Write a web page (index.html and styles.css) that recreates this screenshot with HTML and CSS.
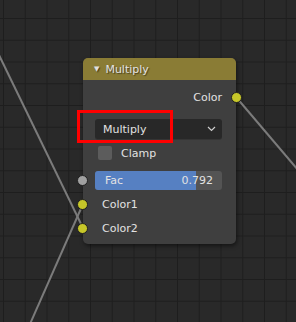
FILE: index.html
```html
<!DOCTYPE html>
<html lang="en">
<head>
    <meta charset="UTF-8">
    <title>Multiply node</title>
    <link rel="stylesheet" href="styles.css">
</head>
<body>
    <div class="editor">
        <svg class="noodles" width="296" height="322" viewBox="0 0 296 322">
            <line x1="-2" y1="53" x2="83" y2="228" />
            <line x1="30" y1="324" x2="83" y2="204" />
            <line x1="236" y1="97" x2="298" y2="170" />
        </svg>

        <div class="node">
            <div class="node-header">
                <span class="collapse">&#9660;</span>
                <span>Multiply</span>
            </div>
            <div class="node-body">
                <div class="row output">
                    <span>Color</span>
                    <span class="socket socket-out yellow"></span>
                </div>
                <div class="dropdown">
                    <span>Multiply</span>
                    <svg class="chevron" width="9" height="6" viewBox="0 0 9 6">
                        <path d="M1 1 L4.5 4.5 L8 1" />
                    </svg>
                </div>
                <div class="row check">
                    <span class="checkbox"></span>
                    <span>Clamp</span>
                </div>
                <div class="row slider-row">
                    <span class="socket socket-in grey"></span>
                    <div class="slider">
                        <div class="slider-fill" style="width: 79.2%"></div>
                        <span class="slider-label">Fac</span>
                        <span class="slider-value">0.792</span>
                    </div>
                </div>
                <div class="row input">
                    <span class="socket socket-in yellow"></span>
                    <span>Color1</span>
                </div>
                <div class="row input">
                    <span class="socket socket-in yellow"></span>
                    <span>Color2</span>
                </div>
            </div>
        </div>

        <!-- red annotation box drawn over the mode dropdown -->
        <div class="highlight"></div>
    </div>
</body>
</html>
```

FILE: styles.css
```css
body {
    margin: 0;
    padding: 0;
    background-color: #282828;
    font-family: "DejaVu Sans", sans-serif;
    font-size: 11px;
    color: #e2e2e2;
}

.editor {
    position: relative;
    width: 296px;
    height: 322px;
    overflow: hidden;
    background-color: #292929;
    background-image:
        linear-gradient(to right, #1e1e1e 1px, transparent 1px),
        linear-gradient(to bottom, #1e1e1e 1px, transparent 1px);
    background-size: 21.75px 21.75px;
    background-position: 3px 18px;
}

.noodles {
    position: absolute;
    left: 0;
    top: 0;
}

.noodles line {
    stroke: #7b7b7b;
    stroke-width: 2;
}

.node {
    position: absolute;
    left: 83px;
    top: 58px;
    width: 153px;
    height: 186px;
    border-radius: 5px;
    background-color: #3f3f3f;
    box-shadow: 1px 2px 4px rgba(0, 0, 0, 0.5);
}

.node-header {
    display: flex;
    align-items: center;
    gap: 6px;
    height: 22px;
    padding-left: 11px;
    background-color: #8a7c35;
    border-radius: 5px 5px 0 0;
    text-shadow: 1px 1px 1px rgba(0, 0, 0, 0.5);
}

.collapse {
    font-size: 7px;
    color: #e0e0e0;
}

.node-body {
    display: flex;
    flex-direction: column;
    padding: 6px 14px 0 12px;
}

.row {
    position: relative;
    display: flex;
    align-items: center;
    height: 24px;
}

.output {
    justify-content: flex-end;
    height: 22px;
}

.socket {
    position: absolute;
    width: 9px;
    height: 9px;
    border-radius: 50%;
    border: 1px solid #202020;
    top: 50%;
    margin-top: -5.5px;
}

.socket-out {
    right: -20px;
}

.socket-in {
    left: -18px;
}

.yellow {
    background-color: #c7c729;
}

.grey {
    background-color: #a1a1a1;
}

.dropdown {
    display: flex;
    align-items: center;
    justify-content: space-between;
    height: 20px;
    margin-top: 11px;
    padding: 0 6px 0 8px;
    border-radius: 3px;
    background-color: #282828;
    box-shadow: 0 1px 0 #353535;
}

.chevron path {
    fill: none;
    stroke: #cfcfcf;
    stroke-width: 1.2;
}

.check {
    gap: 9px;
    margin-top: 2px;
    padding-left: 3px;
    height: 24px;
}

.checkbox {
    width: 14px;
    height: 14px;
    border-radius: 2px;
    background-color: #5c5c5c;
}

.slider-row {
    margin-top: 3px;
    height: 24px;
}

.slider {
    position: relative;
    display: flex;
    align-items: center;
    justify-content: space-between;
    width: 100%;
    height: 19px;
    padding: 0 9px 0 10px;
    box-sizing: border-box;
    border-radius: 3px;
    background-color: #545454;
    overflow: hidden;
}

.slider-fill {
    position: absolute;
    left: 0;
    top: 0;
    bottom: 0;
    background-color: #5680c2;
}

.slider-label,
.slider-value {
    position: relative;
}

.input {
    padding-left: 7px;
}

.highlight {
    position: absolute;
    left: 77px;
    top: 110px;
    width: 96px;
    height: 33px;
    box-sizing: border-box;
    border: 3px solid #ff0000;
}
```
